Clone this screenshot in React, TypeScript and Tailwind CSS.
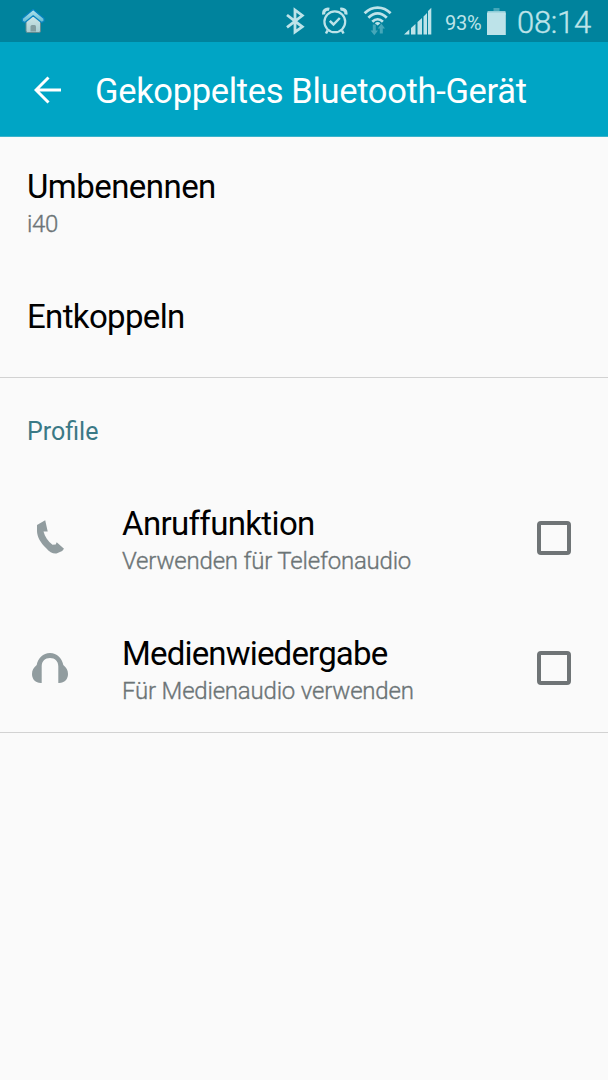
import type { ReactNode } from "react";

function HomeIcon() {
  return (
    <svg className="ml-[21px] shrink-0" width="24" height="26" viewBox="0 0 24 26">
      <defs>
        <linearGradient id="roof" x1="0" y1="0" x2="0" y2="1">
          <stop offset="0" stopColor="#b5e6ee" />
          <stop offset="1" stopColor="#5fb9d0" />
        </linearGradient>
        <linearGradient id="wall" x1="0" y1="0" x2="0" y2="1">
          <stop offset="0" stopColor="#d3e9e9" />
          <stop offset="1" stopColor="#a8cdd2" />
        </linearGradient>
      </defs>
      <path d="M5 12 12 6l7.500 6v11q0 1.500-1.500 1.500H6.500Q5 24.500 5 23Z" fill="url(#wall)" stroke="#5f8b91" strokeWidth="1" />
      <path d="M1.300 13.300V10.500L12.200 1.500 23 10.500v2.800l-2.500 1.200-8.300-6.700-8.300 6.700Z" fill="url(#roof)" stroke="#0784c2" strokeWidth="1.200" strokeLinejoin="round" />
      <path d="M9.500 23.500v-5q0-1.500 1.500-1.500h2.500q1.500 0 1.500 1.500v5Z" fill="#829da0" />
    </svg>
  );
}

function BluetoothIcon() {
  return (
    <svg className="ml-[241px] shrink-0" width="20" height="28" viewBox="0 0 20 28" fill="none" stroke="#bde3e9" strokeWidth="2.800">
      <path d="M1 8 16.300 19.800 9 25V3l7.300 5.500L1 20.300" />
    </svg>
  );
}

function AlarmIcon() {
  return (
    <svg className="ml-[16px] shrink-0" width="26" height="28" viewBox="0 0 26 28" fill="none" stroke="#bde3e9">
      <circle cx="12.800" cy="14.800" r="10.400" strokeWidth="2.200" />
      <path d="M7.800 13.800 11.500 17.500 17.800 11" strokeWidth="2.500" />
      <path d="M1.800 7.500C1 4 3.800 1.500 7.300 2.300M23.800 7.500c.8-3.500-2-6-5.500-5.200" strokeWidth="3.200" />
      <path d="M5.500 23.500 4 26.500M20 23.500l1.500 3" strokeWidth="2.500" />
    </svg>
  );
}

function WifiIcon() {
  return (
    <svg className="ml-[15px] shrink-0" width="30" height="32" viewBox="0 0 30 32" fill="none" stroke="#bde3e9" strokeWidth="2.700">
      <path d="M1.600 8.300C9 .7 20.200.7 27.600 8.300M5.400 12.700C11.200 6.800 18 6.800 23.800 12.700M9.300 16.700c3.300-3.300 7.300-3.300 10.600 0" />
      <path d="M11.800 18.200c1.800-1.500 3.900-1.500 5.700 0l-2.900 2.300Z" fill="#bde3e9" stroke="none" />
      <path d="M9.800 19.500h3v6h2.200l-3.700 4.700-3.700-4.700h2.200ZM16.800 28.500v-5h-2l3.500-5 3.700 5h-2.200v5Z" fill="#45a7b9" stroke="none" />
    </svg>
  );
}

function SignalIcon() {
  return (
    <svg className="ml-[11px] shrink-0" width="28" height="28" viewBox="0 0 28 28" fill="#bde3e9">
      <path d="M0 27.500 5.300 22.500v5ZM7 21l4.500-4v10.500H7ZM13.500 15l4.500-4v16.500h-4.500ZM19.500 9.500 23 6v21.500h-3.500ZM24 4l3.300-3.300v26.800H24Z" />
    </svg>
  );
}

function BatteryIcon() {
  return (
    <svg className="ml-[5px] shrink-0" width="19" height="27" viewBox="0 0 19 27">
      <path d="M6.500 0h6v3.500h-6Z" fill="#45a7b9" />
      <path d="M.5 3h18V7H.5Z" fill="#90cdd8" />
      <path d="M0 4.500h18.800V27H0Z" fill="#bde3e9" />
    </svg>
  );
}

function StatusBar() {
  return (
    <div className="flex h-[42px] items-center bg-[#00839d] text-[#bde3e9]">
      <HomeIcon />
      <BluetoothIcon />
      <AlarmIcon />
      <WifiIcon />
      <SignalIcon />
      <span className="ml-[13px] w-[37px] whitespace-nowrap pt-[3px] text-[20px] leading-none tracking-[-0.3px]">93%</span>
      <BatteryIcon />
      <span className="ml-[11px] whitespace-nowrap pt-[2px] text-[31px] font-light leading-none tracking-[-0.3px] [-webkit-text-stroke:0.4px]">08:14</span>
    </div>
  );
}

function Header() {
  return (
    <header className="flex h-[95px] items-center border-b border-[#3bb3cb] bg-[#00a5c5] text-white">
      <svg className="ml-[34px] mt-[1px] shrink-0" width="28" height="28" viewBox="0 0 28 28" fill="none" stroke="currentColor" strokeWidth="3">
        <path d="M14.500 1.500 2 14l12.500 12.500M2 14h25" />
      </svg>
      <h1 className="ml-[33px] whitespace-nowrap pt-[3px] text-[34.5px] leading-[40px] tracking-[-0.33px]">Gekoppeltes Bluetooth-Gerät</h1>
    </header>
  );
}

function PhoneIcon() {
  return (
    <svg width="28" height="36" viewBox="0 0 28 36" fill="#919c9f">
      <path d="M0 5 8.200.3 10.700 11.500H6.500c1.300 5.300 4.500 9.800 9 13.300l3.200-.3 1-2.200 7.300 6.400-1.800 2.300-5.700 2.500c-3.500.5-7-1.500-10.500-5.500C3.500 23 0 16.500 0 11Z" />
    </svg>
  );
}

function HeadphonesIcon() {
  return (
    <svg width="36" height="32" viewBox="0 0 36 32" fill="#919c9f">
      <path d="M9.700 31C4 31.500 0 27.500 0 22c0-4 1.700-6.500 4.700-9C6 6 11 1 18 1s12 5 13.300 12c3 2.500 4.700 5 4.700 9 0 5.500-4 9.500-9.700 9V14.500C26.300 9 23 6 18 6s-8.300 3-8.300 8.500Z" />
    </svg>
  );
}

function Profile({ icon, title, detail, titleClass, detailClass }: { icon: ReactNode; title: string; detail: string; titleClass: string; detailClass: string }) {
  return (
    <label className="flex h-[130px] items-center pr-[37px]">
      <span className="flex w-[122px] shrink-0 items-center">{icon}</span>
      <span className="flex flex-1 flex-col whitespace-nowrap pt-[6px]">
        <span className={`text-[33px] leading-[40px] text-black ${titleClass}`}>{title}</span>
        <span className={`text-[24px] font-light leading-[34px] text-[#6c7476] [-webkit-text-stroke:0.35px] ${detailClass}`}>{detail}</span>
      </span>
      <input type="checkbox" className="size-[34px] shrink-0 appearance-none rounded-[4px] border-4 border-[#6f7476]" />
    </label>
  );
}

export default function App() {
  return (
    <main className="h-[1080px] w-[608px] overflow-hidden bg-[#fafafa] font-[Roboto,sans-serif]">
      <StatusBar />
      <Header />
      <section className="h-[241px] border-b border-[#d2d2d2] pl-[27px]">
        <div className="flex h-[114px] flex-col pt-[30px]">
          <span className="text-[33px] leading-[40px] tracking-[-0.55px] text-black">Umbenennen</span>
          <span className="text-[24px] font-light leading-[34px] tracking-[-0.3px] text-[#6c7476] [-webkit-text-stroke:0.35px]">i40</span>
        </div>
        <div className="flex h-[130px] items-center pt-[2px] text-[33px] leading-[40px] tracking-[-0.65px] text-black">Entkoppeln</div>
      </section>
      <section className="h-[355px] border-b border-[#d2d2d2]">
        <h2 className="flex h-[95px] items-center pl-[27px] pt-[12px] text-[25px] leading-8 text-[#3a7986]">Profile</h2>
        <Profile icon={<span className="pl-[37px]"><PhoneIcon /></span>} title="Anruffunktion" detail="Verwenden für Telefonaudio" titleClass="tracking-[-0.65px]" detailClass="tracking-[-0.2px]" />
        <Profile icon={<span className="pl-[32px]"><HeadphonesIcon /></span>} title="Medienwiedergabe" detail="Für Medienaudio verwenden" titleClass="tracking-[-0.82px]" detailClass="tracking-[-0.2px]" />
      </section>
    </main>
  );
}
